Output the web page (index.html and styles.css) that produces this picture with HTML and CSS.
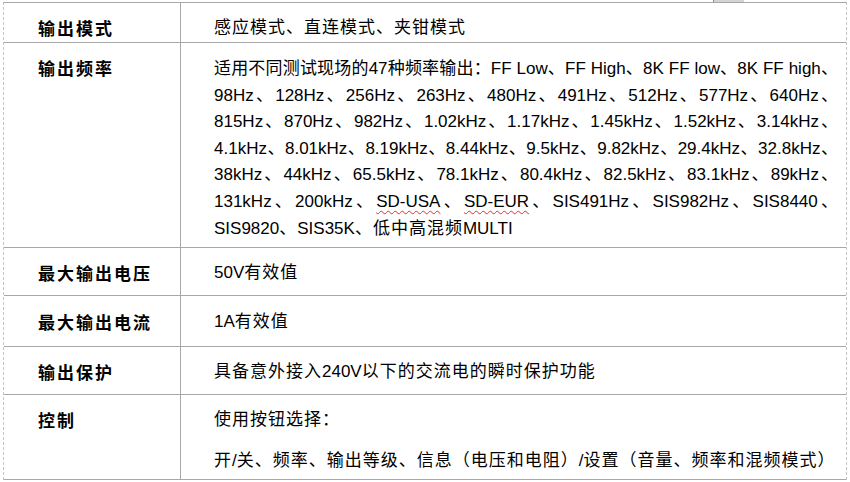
FILE: index.html
```html
<!DOCTYPE html>
<html lang="zh">
<head>
<meta charset="utf-8">
<title>规格</title>
<link rel="stylesheet" href="styles.css">
</head>
<body>
<div class="sheet">
  <div class="tab"></div>
  <div class="spec">
    <div class="row r1">
      <div class="label">输出模式</div>
      <div class="value"><span class="c">感应模式、直连模式、夹钳模式</span></div>
    </div>
    <div class="row r2">
      <div class="label">输出频率</div>
      <div class="value lines">
        <div class="jl">适用不同测试现场的47种频率输出：FF Low、FF High、8K FF low、8K FF high、</div>
        <div class="jl">98Hz、128Hz、256Hz、263Hz、480Hz、491Hz、512Hz、577Hz、640Hz、</div>
        <div class="jl">815Hz、870Hz、982Hz、1.02kHz、1.17kHz、1.45kHz、1.52kHz、3.14kHz、</div>
        <div class="jl">4.1kHz、8.01kHz、8.19kHz、8.44kHz、9.5kHz、9.82kHz、29.4kHz、32.8kHz、</div>
        <div class="jl">38kHz、44kHz、65.5kHz、78.1kHz、80.4kHz、82.5kHz、83.1kHz、89kHz、</div>
        <div class="jl">131kHz、200kHz、<span class="spell">SD-USA</span>、<span class="spell">SD-EUR</span>、SIS491Hz、SIS982Hz、SIS8440、</div>
        <div>SIS9820<span class="c">、</span>SIS35K<span class="c">、低中高混频</span>MULTI</div>
      </div>
    </div>
    <div class="row r3">
      <div class="label">最大输出电压</div>
      <div class="value">50V<span class="c">有效值</span></div>
    </div>
    <div class="row r4">
      <div class="label">最大输出电流</div>
      <div class="value">1A<span class="c">有效值</span></div>
    </div>
    <div class="row r5">
      <div class="label">输出保护</div>
      <div class="value"><span class="c">具备意外接入</span>240V<span class="c">以下的交流电的瞬时保护功能</span></div>
    </div>
    <div class="row r6">
      <div class="label">控制</div>
      <div class="value">
        <p class="para"><span class="c">使用按钮选择：</span></p>
        <p class="para"><span class="c">开</span>/<span class="c">关、频率、输出等级、信息（电压和电阻）</span>/<span class="c">设置（音量、频率和混频模式）</span></p>
      </div>
    </div>
  </div>
</div>
</body>
</html>
```

FILE: styles.css
```css
html, body {
  margin: 0;
  padding: 0;
  background: #ffffff;
}

body {
  font-family: "Liberation Sans", "Noto Sans CJK SC", sans-serif;
  font-size: 17px;
  color: #000000;
}

.sheet {
  position: relative;
  padding: 2px 0 0 3px;
  width: 847px;
  box-sizing: border-box;
}

.tab {
  position: absolute;
  left: 713px;
  top: 0;
  width: 30px;
  height: 2px;
  background: #d4d4d4;
  border-left: 1px solid #8c8c8c;
}

.spec {
  width: 844px;
  box-sizing: border-box;
  border-top: 1px solid #a8a8a8;
  border-left: 1px dashed #c4c4c4;
  border-right: 1px dashed #c4c4c4;
}

.row {
  display: grid;
  grid-template-columns: 177px 1fr;
  border-bottom: 1px solid #a8a8a8;
}

.label {
  box-sizing: border-box;
  border-right: 1px solid #a8a8a8;
  padding: 12px 0 0 34px;
  line-height: 26px;
  font-weight: bold;
  letter-spacing: 2px;
  font-family: "Noto Sans CJK SC", sans-serif;
}

.value {
  padding: 12px 8px 9px 33px;
  line-height: 26px;
  white-space: nowrap;
}

.c {
  letter-spacing: 1px;
}

.r1 .value { padding-bottom: 1px; }

.r2 .value {
  padding-top: 13px;
  padding-bottom: 5px;
  line-height: 26.6px;
  white-space: normal;
}

.jl {
  text-align: justify;
  text-align-last: justify;
}

.spell {
  text-decoration: underline wavy #e03030;
  text-decoration-thickness: 1px;
  text-underline-offset: 3px;
}

.r4 .label,
.r4 .value { padding-top: 13px; }
.r4 .value { padding-bottom: 11px; }

.r6 .value { padding-bottom: 5px; }

.para {
  margin: 0;
}

.para + .para {
  margin-top: 15px;
}
```
